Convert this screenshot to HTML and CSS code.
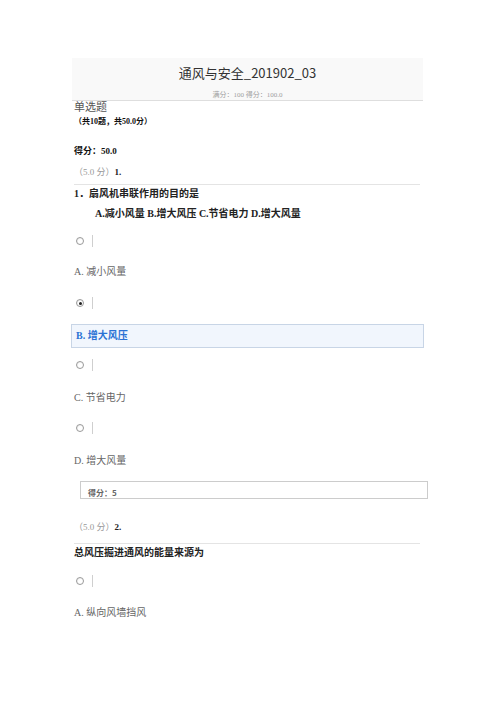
FILE: index.html
```html
<!DOCTYPE html>
<html lang="zh">
<head>
<meta charset="utf-8">
<title>通风与安全_201902_03</title>
<link rel="stylesheet" href="styles.css">
</head>
<body>
<div class="page">
  <div class="header">
    <div class="title">通风与安全_201902_03</div>
    <div class="sub">满分：100 得分：100.0</div>
  </div>
  <div class="type">单选题</div>
  <div class="count">（共10题，共50.0分）</div>
  <div class="total">得分：50.0</div>

  <div class="qscore first">（5.0 分）<b>1.</b></div>
  <div class="qtext">1．扇风机串联作用的目的是</div>
  <div class="qopts">A.减小风量 B.增大风压 C.节省电力 D.增大风量</div>

  <div class="radio-row r1"><span class="radio"></span><span class="bar"></span></div>
  <div class="opt o1">A. 减小风量</div>
  <div class="radio-row r2"><span class="radio checked"></span><span class="bar"></span></div>
  <div class="opt-selected">B. 增大风压</div>
  <div class="radio-row r3"><span class="radio"></span><span class="bar"></span></div>
  <div class="opt o3">C. 节省电力</div>
  <div class="radio-row r4"><span class="radio"></span><span class="bar"></span></div>
  <div class="opt o4">D. 增大风量</div>
  <div class="score-box">得分：5</div>

  <div class="qscore second">（5.0 分）<b>2.</b></div>
  <div class="qtext">总风压掘进通风的能量来源为</div>
  <div class="radio-row r5"><span class="radio"></span><span class="bar"></span></div>
  <div class="opt o5">A. 纵向风墙挡风</div>
</div>
</body>
</html>
```

FILE: styles.css
```css
html, body {
  margin: 0;
  padding: 0;
  background: #ffffff;
}
body {
  font-family: "Liberation Serif", "Noto Sans CJK SC", serif;
  color: #222;
}
.page {
  margin-left: 72px;
  width: 351px;
  padding-top: 58px;
}
.header {
  background: #f9f9f9;
  height: 43px;
  border-bottom: 1px solid #dedede;
  box-sizing: border-box;
  text-align: center;
  padding-top: 7px;
}
.title {
  font-family: "Noto Sans CJK SC", "Liberation Sans", sans-serif;
  font-size: 13px;
  line-height: 16px;
  color: #333;
}
.sub {
  margin-top: 9px;
  font-size: 7px;
  line-height: 10px;
  color: #a0a0a0;
}
.type {
  font-size: 11px;
  line-height: 10px;
  color: #555;
  margin-left: 2px;
  margin-top: 1px;
}
.count {
  margin-top: 5px;
  margin-left: 2px;
  font-size: 8px;
  line-height: 10px;
  font-weight: bold;
  color: #111;
}
.total {
  margin-top: 19px;
  margin-left: 2px;
  font-size: 9px;
  line-height: 10px;
  font-weight: bold;
  color: #111;
}
.qscore {
  margin-left: 2px;
  margin-right: 3px;
  font-size: 9px;
  line-height: 10px;
  color: #999;
  border-bottom: 1px solid #e4e4e4;
}
.qscore b {
  color: #222;
}
.qscore.first {
  margin-top: 11px;
  padding-bottom: 7px;
}
.qscore.second {
  margin-top: 23px;
  padding-bottom: 11px;
}
.qtext {
  margin-top: 4px;
  margin-left: 2px;
  font-size: 10px;
  line-height: 10px;
  font-weight: bold;
  color: #222;
}
.qopts {
  margin-top: 10px;
  margin-left: 23px;
  font-size: 10px;
  line-height: 10px;
  font-weight: bold;
  color: #222;
}
.radio-row {
  display: flex;
  align-items: center;
  height: 12px;
  margin-left: 4px;
  gap: 8px;
}
.radio {
  width: 6px;
  height: 6px;
  border-radius: 50%;
  border: 1px solid #9a9a9a;
  background: radial-gradient(circle at 60% 60%, #ffffff 40%, #e0e0e0 100%);
  position: relative;
}
.radio.checked::after {
  content: "";
  position: absolute;
  left: 1.5px;
  top: 1.5px;
  width: 3px;
  height: 3px;
  border-radius: 50%;
  background: #222;
}
.bar {
  width: 1px;
  height: 12px;
  background: #cfcfcf;
}
.r1 { margin-top: 16px; }
.r2 { margin-top: 20px; }
.r3 { margin-top: 11px; }
.r4 { margin-top: 19px; }
.r5 { margin-top: 17px; }
.opt {
  margin-left: 2px;
  font-size: 10px;
  line-height: 10px;
  color: #666;
}
.o1 { margin-top: 20px; }
.o3 { margin-top: 22px; }
.o4 { margin-top: 22px; }
.o5 { margin-top: 21px; }
.opt-selected {
  margin-top: 15px;
  margin-left: -1px;
  width: 353px;
  box-sizing: border-box;
  height: 24px;
  padding: 6px 0 0 4px;
  background: #f1f6fd;
  border: 1px solid #c8d5e6;
  font-size: 10px;
  line-height: 10px;
  font-weight: bold;
  color: #2a72d4;
}
.score-box {
  margin-top: 15px;
  margin-left: 8px;
  width: 348px;
  height: 18px;
  box-sizing: border-box;
  border: 1px solid #cccccc;
  padding: 6px 0 0 7px;
  font-family: "Noto Sans CJK SC", "Liberation Sans", sans-serif;
  font-size: 8px;
  line-height: 10px;
  font-weight: bold;
  color: #666;
}
```
